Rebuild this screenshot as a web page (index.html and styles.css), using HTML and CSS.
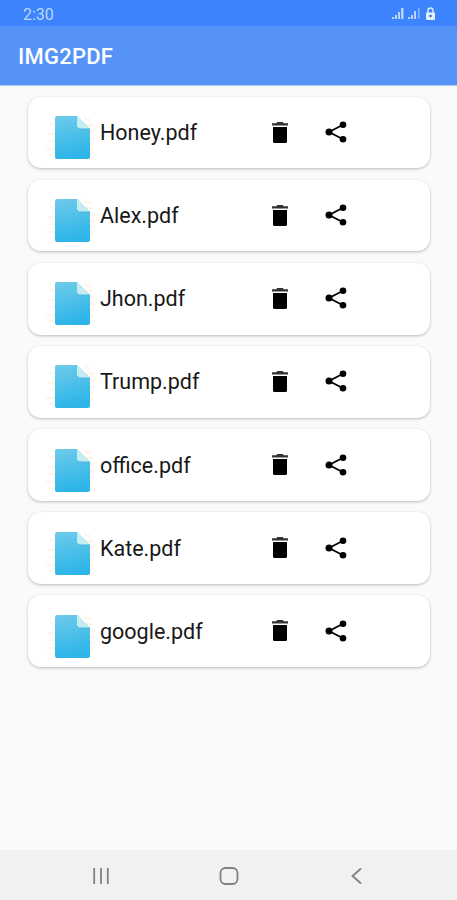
FILE: index.html
```html
<!DOCTYPE html>
<html lang="en">
<head>
<meta charset="utf-8">
<title>IMG2PDF</title>
<link rel="stylesheet" href="styles.css">
</head>
<body>
<svg class="defs" aria-hidden="true">
  <defs>
    <linearGradient id="paper" x1="0" y1="0" x2="0.2" y2="1">
      <stop offset="0" stop-color="#6fcbea"/>
      <stop offset="1" stop-color="#2db5e8"/>
    </linearGradient>
    <symbol id="file" viewBox="0 0 52 48">
      <g fill="none" stroke="#fff5ea" stroke-width="2.500">
        <path d="M5 11h5M3 21h7M4 28h6M1 36h9M4 42h5"/>
        <path d="M39 5l6 2M40 12h8M45 18h5M44 25h6M45 31h3M44 37h4"/>
      </g>
      <path fill="url(#paper)" d="M10 3h22l13 13v28q0 2-2 2H12q-2 0-2-2V5q0-2 2-2z"/>
      <path fill="#c4edf1" d="M32 3l13 13H34q-2 0-2-2z"/>
      <path fill="none" stroke="#45b7df" d="M32.500 14q0 2 2 2H45"/>
      <path stroke="#2fabdc" stroke-width=".6" d="M26 37.500h5"/>
    </symbol>
    <symbol id="trash" viewBox="0 0 16 22">
      <path fill="#333" d="M5.200 0h5.600l1 1.300H16v2.200H0V1.300h4.200z"/>
      <path d="M1 5h14v14.500q0 1.500-1.500 1.500h-11Q1 21 1 19.500z"/>
    </symbol>
    <symbol id="share" viewBox="0 0 22 22">
      <path fill="none" stroke="#000" stroke-width="1.800" d="M18 3.700L4 11l14 7.300"/>
      <circle cx="18" cy="3.700" r="3.300"/><circle cx="4" cy="11" r="3.500"/><circle cx="18" cy="18.300" r="3.300"/>
    </symbol>
  </defs>
</svg>
<div class="screen">
  <div class="status">
    <span>2:30</span>
    <svg width="44" height="14" viewBox="0 0 44 14">
      <g fill="#b9d5fa">
        <path d="M0 10h2v2H0zM3 8h2v4H3zM6 5h2v7H6zM9 1h2.500v11H9z"/>
        <path d="M16 10h2v2h-2zM19 8h2v4h-2zM22 4h2v8h-2z"/>
        <path opacity=".6" d="M26 1h1.500v11H26z"/>
      </g>
      <path fill="none" stroke="#d9e9fb" stroke-width="1.500" d="M36 6V3.500a2.500 2.500 0 0 1 5 0V6"/>
      <rect x="34" y="5.500" width="9" height="7.500" rx="1" fill="#e4f1fb"/>
      <circle cx="38.500" cy="9" r="1.300" fill="#3270c4"/>
    </svg>
  </div>
  <header class="appbar">IMG2PDF</header>
  <main class="list">
    <div class="card"><svg class="file"><use href="#file"/></svg><span class="name">Honey.pdf</span><svg class="trash"><use href="#trash"/></svg><svg class="share"><use href="#share"/></svg></div>
    <div class="card"><svg class="file"><use href="#file"/></svg><span class="name">Alex.pdf</span><svg class="trash"><use href="#trash"/></svg><svg class="share"><use href="#share"/></svg></div>
    <div class="card"><svg class="file"><use href="#file"/></svg><span class="name">Jhon.pdf</span><svg class="trash"><use href="#trash"/></svg><svg class="share"><use href="#share"/></svg></div>
    <div class="card"><svg class="file"><use href="#file"/></svg><span class="name">Trump.pdf</span><svg class="trash"><use href="#trash"/></svg><svg class="share"><use href="#share"/></svg></div>
    <div class="card"><svg class="file"><use href="#file"/></svg><span class="name">office.pdf</span><svg class="trash"><use href="#trash"/></svg><svg class="share"><use href="#share"/></svg></div>
    <div class="card"><svg class="file"><use href="#file"/></svg><span class="name">Kate.pdf</span><svg class="trash"><use href="#trash"/></svg><svg class="share"><use href="#share"/></svg></div>
    <div class="card"><svg class="file"><use href="#file"/></svg><span class="name">google.pdf</span><svg class="trash"><use href="#trash"/></svg><svg class="share"><use href="#share"/></svg></div>
  </main>
  <nav class="navbar">
    <svg width="20" height="20" viewBox="0 0 20 20"><path d="M3.200 2v16M10 2v16M16.800 2v16"/></svg>
    <svg width="20" height="20" viewBox="0 0 20 20"><rect x="1.500" y="2" width="17" height="16" rx="5"/></svg>
    <svg width="20" height="20" viewBox="0 0 20 20"><path d="M14 2.500L5.500 10l8.500 7.500"/></svg>
  </nav>
</div>
</body>
</html>
```
FILE: styles.css
```css
* { box-sizing: border-box; }
body {
  margin: 0;
  font-family: Roboto, "Liberation Sans", sans-serif;
  background: #fafafa;
}
.defs { display: block; width: 0; height: 0; }
.screen {
  display: flex;
  flex-direction: column;
  width: 457px;
  height: 900px;
  overflow: hidden;
}
.status {
  display: flex;
  align-items: center;
  justify-content: space-between;
  flex: none;
  height: 26px;
  padding: 2px 21px 0 23px;
  background: #3d83fe;
  color: #b9d9fb;
  font-size: 16px;
}
.appbar {
  display: flex;
  align-items: center;
  flex: none;
  height: 59px;
  padding: 2px 0 0 18px;
  background: #5594f6;
  box-shadow: 0 1px 1px #b5cdf5;
  color: #fff;
  font-size: 22px;
  font-weight: 500;
  letter-spacing: .25px;
}
.list {
  display: flex;
  flex-direction: column;
  flex: 1;
  gap: 11.7px;
  padding: 12px 27px 0 28px;
}
.card {
  display: flex;
  align-items: center;
  flex: none;
  height: 71.4px;
  padding-left: 17px;
  border-radius: 13px;
  background: #fff;
  box-shadow: 0 1px 3px rgba(0, 0, 0, .26);
}
.file { width: 52px; height: 48px; margin-top: 9px; }
.name {
  width: 172px;
  padding: 1px 0 0 3px;
  color: #181818;
  font-size: 21.500px;
  line-height: 28px;
}
.trash { width: 16px; height: 22px; margin-left: 3px; }
.share { width: 22px; height: 22px; margin: -1px 0 0 37px; }
.navbar {
  display: flex;
  align-items: center;
  justify-content: space-between;
  flex: none;
  height: 50px;
  padding: 2px 90px 0 91px;
  background: #f1f1f1;
}
.navbar svg { fill: none; stroke: #828282; stroke-width: 1.800; }
```
